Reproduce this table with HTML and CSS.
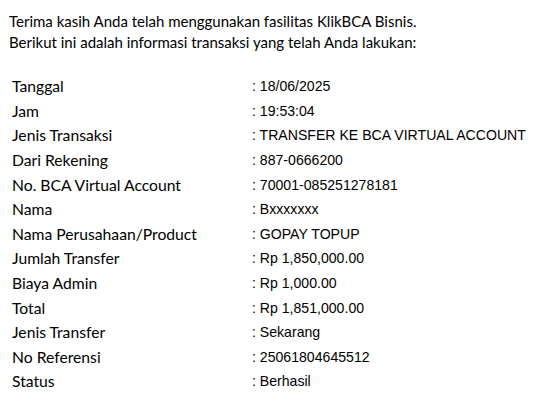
FILE: index.html
```html
<!DOCTYPE html>
<html>
<head>
<meta charset="utf-8">
<link rel="stylesheet" href="styles.css">
</head>
<body>
<div class="mail">
  <p class="intro">Terima kasih Anda telah menggunakan fasilitas KlikBCA Bisnis.<br>Berikut ini adalah informasi transaksi yang telah Anda lakukan:</p>
  <table class="details">
    <tr><td class="label">Tanggal</td><td class="value">: 18/06/2025</td></tr>
    <tr><td class="label">Jam</td><td class="value">: 19:53:04</td></tr>
    <tr><td class="label">Jenis Transaksi</td><td class="value">: TRANSFER KE BCA VIRTUAL ACCOUNT</td></tr>
    <tr><td class="label">Dari Rekening</td><td class="value">: 887-0666200</td></tr>
    <tr><td class="label">No. BCA Virtual Account</td><td class="value">: 70001-085251278181</td></tr>
    <tr><td class="label">Nama</td><td class="value">: Bxxxxxxx</td></tr>
    <tr><td class="label">Nama Perusahaan/Product</td><td class="value">: GOPAY TOPUP</td></tr>
    <tr><td class="label">Jumlah Transfer</td><td class="value">: Rp 1,850,000.00</td></tr>
    <tr><td class="label">Biaya Admin</td><td class="value">: Rp 1,000.00</td></tr>
    <tr><td class="label">Total</td><td class="value">: Rp 1,851,000.00</td></tr>
    <tr><td class="label">Jenis Transfer</td><td class="value">: Sekarang</td></tr>
    <tr><td class="label">No Referensi</td><td class="value">: 25061804645512</td></tr>
    <tr><td class="label">Status</td><td class="value">: Berhasil</td></tr>
  </table>
</div>
</body>
</html>
```
FILE: styles.css
```css
html, body {
  margin: 0;
  padding: 0;
  background: #fff;
}
.mail {
  padding: 11px 0 0 9px;
  color: #000;
  font-family: Lato, "Liberation Sans", sans-serif;
  font-size: 15px;
}
.intro {
  margin: 0;
  line-height: 21px;
}
.details {
  margin-top: 21px;
  margin-left: 3px;
  border-collapse: collapse;
}
.details td {
  padding: 0;
  height: 24.6px;
  line-height: 18px;
  vertical-align: middle;
  white-space: nowrap;
}
.label {
  width: 240px;
  font-size: 15.7px;
}
.value {
  font-family: "Liberation Sans", Arial, sans-serif;
  font-size: 14.1px;
}
```
